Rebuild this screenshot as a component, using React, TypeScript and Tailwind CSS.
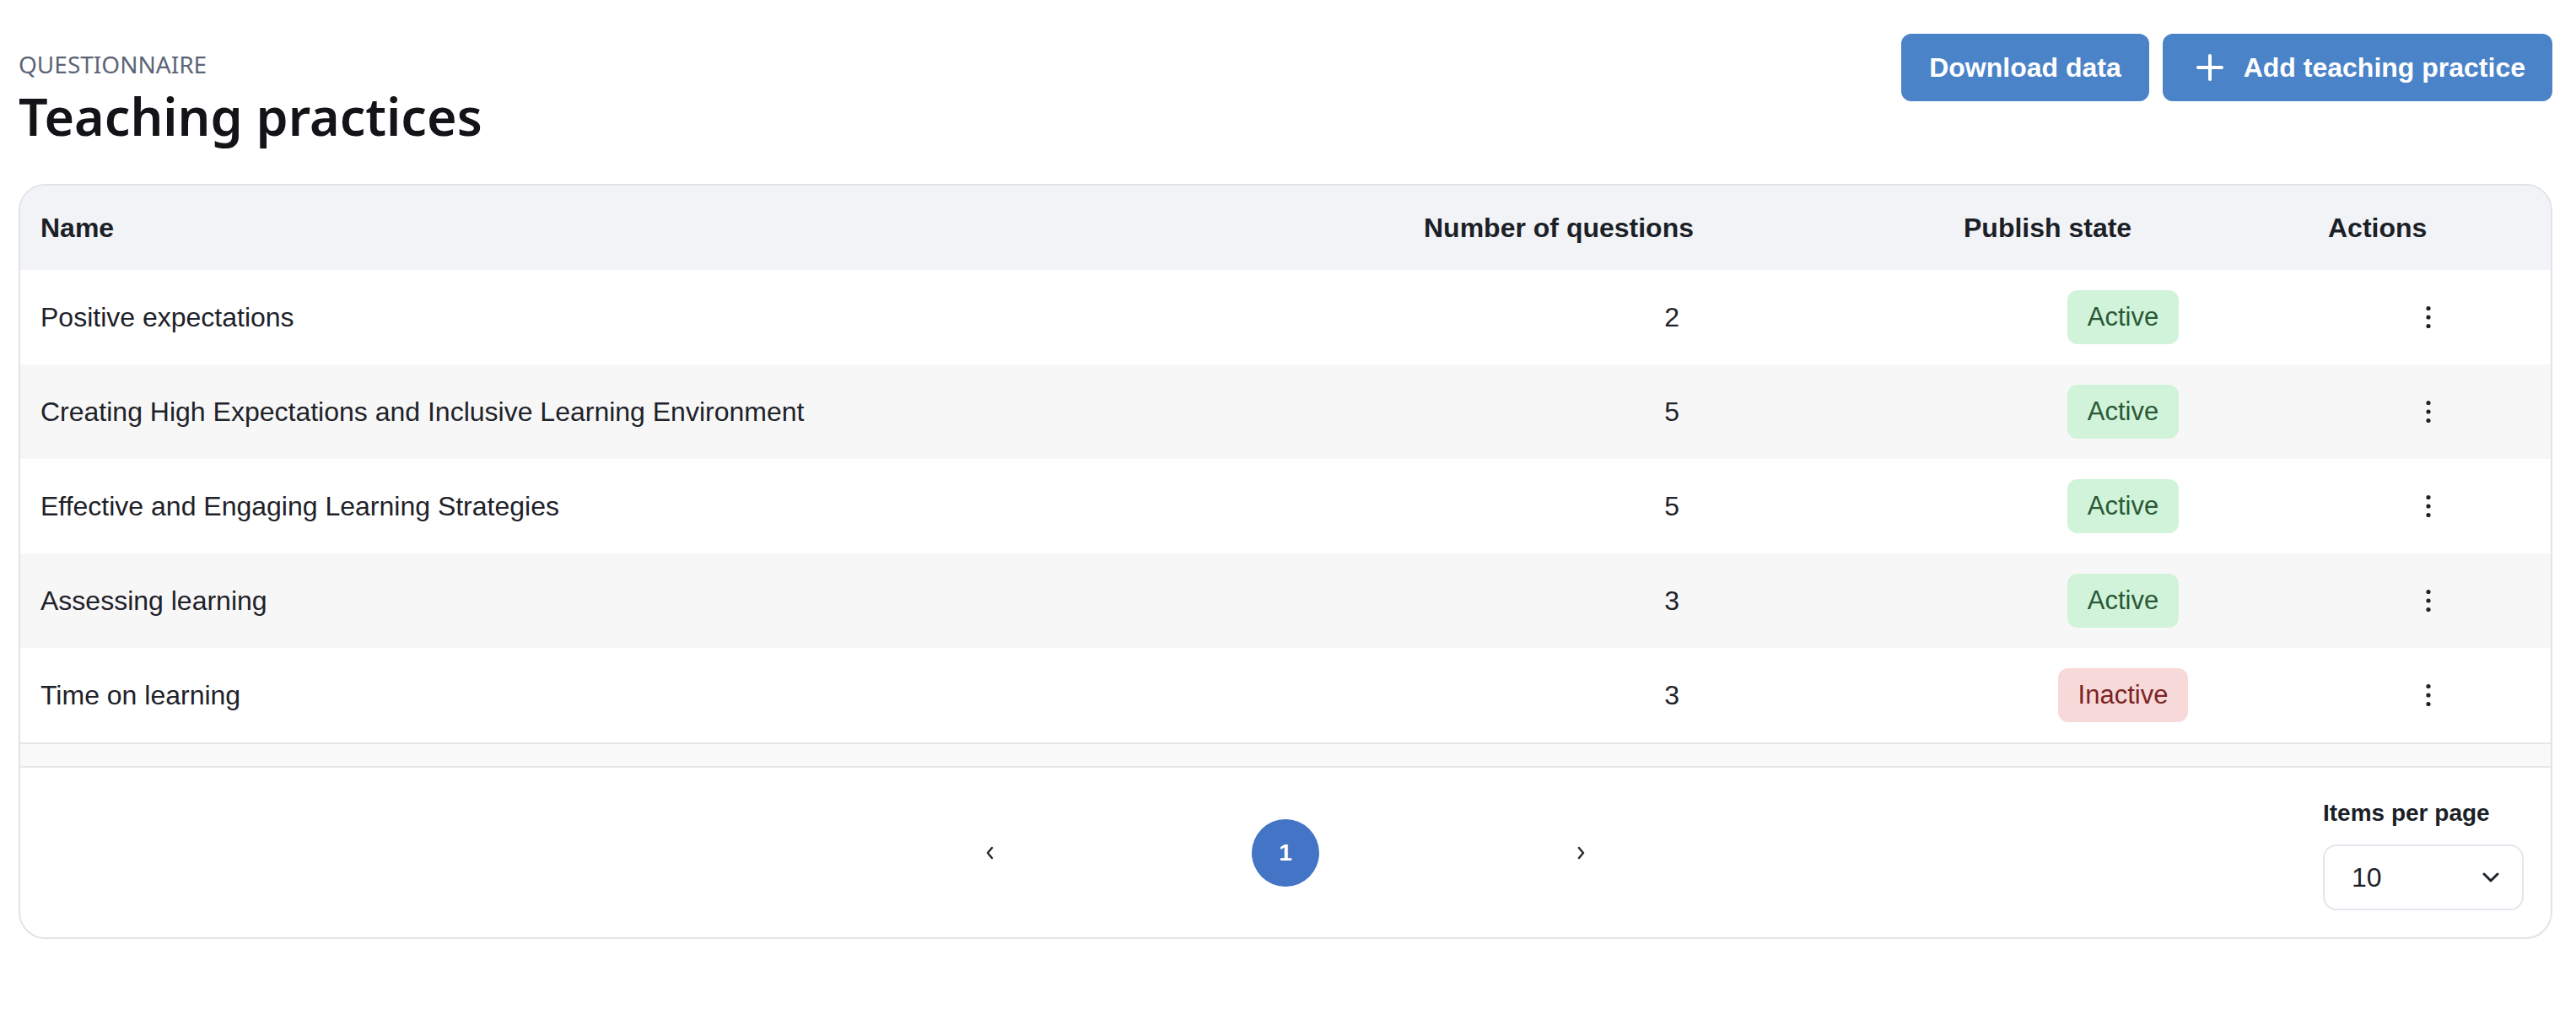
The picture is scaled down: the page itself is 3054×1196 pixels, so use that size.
import React from 'react';

type Row = { name: string; count: number; active: boolean };

const rows: Row[] = [
  { name: 'Positive expectations', count: 2, active: true },
  { name: 'Creating High Expectations and Inclusive Learning Environment', count: 5, active: true },
  { name: 'Effective and Engaging Learning Strategies', count: 5, active: true },
  { name: 'Assessing learning', count: 3, active: true },
  { name: 'Time on learning', count: 3, active: false },
];

const sans = "font-['Liberation_Sans',Arial,sans-serif]";
const cols = 'grid grid-cols-[1626px_390px_640px_1fr]';

const PlusIcon = () => (
  <svg width="32" height="32" viewBox="0 0 32 32" fill="none" stroke="currentColor" strokeWidth="4" strokeLinecap="round">
    <path d="M16 2v28M2 16h28" />
  </svg>
);

const Kebab = () => (
  <svg width="12" height="32" viewBox="0 0 12 32" fill="#222">
    <circle cx="6" cy="5.5" r="2.6" />
    <circle cx="6" cy="16" r="2.6" />
    <circle cx="6" cy="26.5" r="2.6" />
  </svg>
);

const Chevron = ({ dir }: { dir: 'left' | 'right' }) => (
  <svg width="12" height="16" viewBox="0 0 12 16" fill="none" stroke="#2b2b2b" strokeWidth="2.5" strokeLinecap="round" strokeLinejoin="round">
    {dir === 'left' ? <polyline points="8,2 3,8 8,14" /> : <polyline points="4,2 9,8 4,14" />}
  </svg>
);

const StateBadge = ({ active }: { active: boolean }) =>
  active ? (
    <span className="h-[64px] px-[24px] flex items-center rounded-[12px] bg-[#d0f3d9] text-[#2b5937] text-[31px]">Active</span>
  ) : (
    <span className="h-[64px] px-[24px] flex items-center rounded-[12px] bg-[#f8d9d9] text-[#7a2525] text-[31px]">Inactive</span>
  );

export default function App() {
  return (
    <div className={`min-h-[1196px] bg-white pl-[22px] pr-[28px] pt-[40px] ${sans}`}>
      {/* Page header */}
      <div className="flex justify-between items-start">
        <div className="pt-[16px] font-['Noto_Sans',sans-serif]">
          <div className="text-[28px] leading-[40px] text-[#5c6577] uppercase">Questionnaire</div>
          <h1 className="mt-[2px] text-[61px] leading-[80px] font-semibold text-[#121417]">Teaching practices</h1>
        </div>
        <div className="flex gap-[16px]">
          <button className="h-[80px] px-[33px] rounded-[12px] bg-[#4a83c8] text-white text-[32px] font-bold">
            Download data
          </button>
          <button className="h-[80px] pl-[40px] pr-[32px] rounded-[12px] bg-[#4a83c8] text-white text-[32px] font-bold flex items-center gap-[24px]">
            <PlusIcon />
            <span>Add teaching practice</span>
          </button>
        </div>
      </div>

      {/* Table card */}
      <div className="mt-[40px] border-2 border-[#e0e3e8] rounded-[32px] overflow-hidden">
        <div className={`${cols} h-[100px] bg-[#f2f3f6] text-[32px] font-bold text-[#1b1f27]`}>
          <div className="pl-[24px] flex items-center">Name</div>
          <div className="pr-[32px] flex items-center justify-end">Number of questions</div>
          <div className="pl-[288px] flex items-center">Publish state</div>
          <div className="pl-[80px] flex items-center">Actions</div>
        </div>

        {rows.map((r, i) => (
          <div key={r.name} className={`${cols} h-[112px] text-[32px] text-[#1e2229] ${i % 2 === 1 ? 'bg-[#f7f7f7]' : 'bg-white'}`}>
            <div className="pl-[24px] flex items-center">{r.name}</div>
            <div className="pr-[49px] flex items-center justify-end">{r.count}</div>
            <div className="pl-[314px] flex items-center justify-center">
              <StateBadge active={r.active} />
            </div>
            <div className="pl-[193px] flex items-center">
              <Kebab />
            </div>
          </div>
        ))}

        <div className="h-[30px] border-t-2 border-b-2 border-[#e6e6e6] bg-[#f9f9f9]" />

        {/* Footer */}
        <div className="grid grid-cols-[1fr_auto_1fr] h-[201px]">
          <div />
          <div className="flex items-center gap-[270px]">
            <button className="w-[80px] h-[80px] flex items-center justify-center">
              <Chevron dir="left" />
            </button>
            <button className="w-[80px] h-[80px] rounded-full bg-[#4374c5] text-white text-[28px] font-bold flex items-center justify-center">
              1
            </button>
            <button className="w-[80px] h-[80px] flex items-center justify-center">
              <Chevron dir="right" />
            </button>
          </div>
          <div className="flex justify-end pr-[32px] pt-[34px]">
            <div className="w-[238px]">
              <div className="text-[28px] leading-[40px] font-bold text-[#1b1f27]">Items per page</div>
              <div className="mt-[17px] h-[78px] border-2 border-[#e2e6ee] rounded-[16px] pl-[32px] pr-[27px] flex items-center justify-between">
                <span className="text-[32px] text-[#1e2229]">10</span>
                <svg width="20" height="13" viewBox="0 0 20 13" fill="none" stroke="#1e2229" strokeWidth="3" strokeLinecap="round" strokeLinejoin="round">
                  <polyline points="2,2 10,10 18,2" />
                </svg>
              </div>
            </div>
          </div>
        </div>
      </div>
    </div>
  );
}
